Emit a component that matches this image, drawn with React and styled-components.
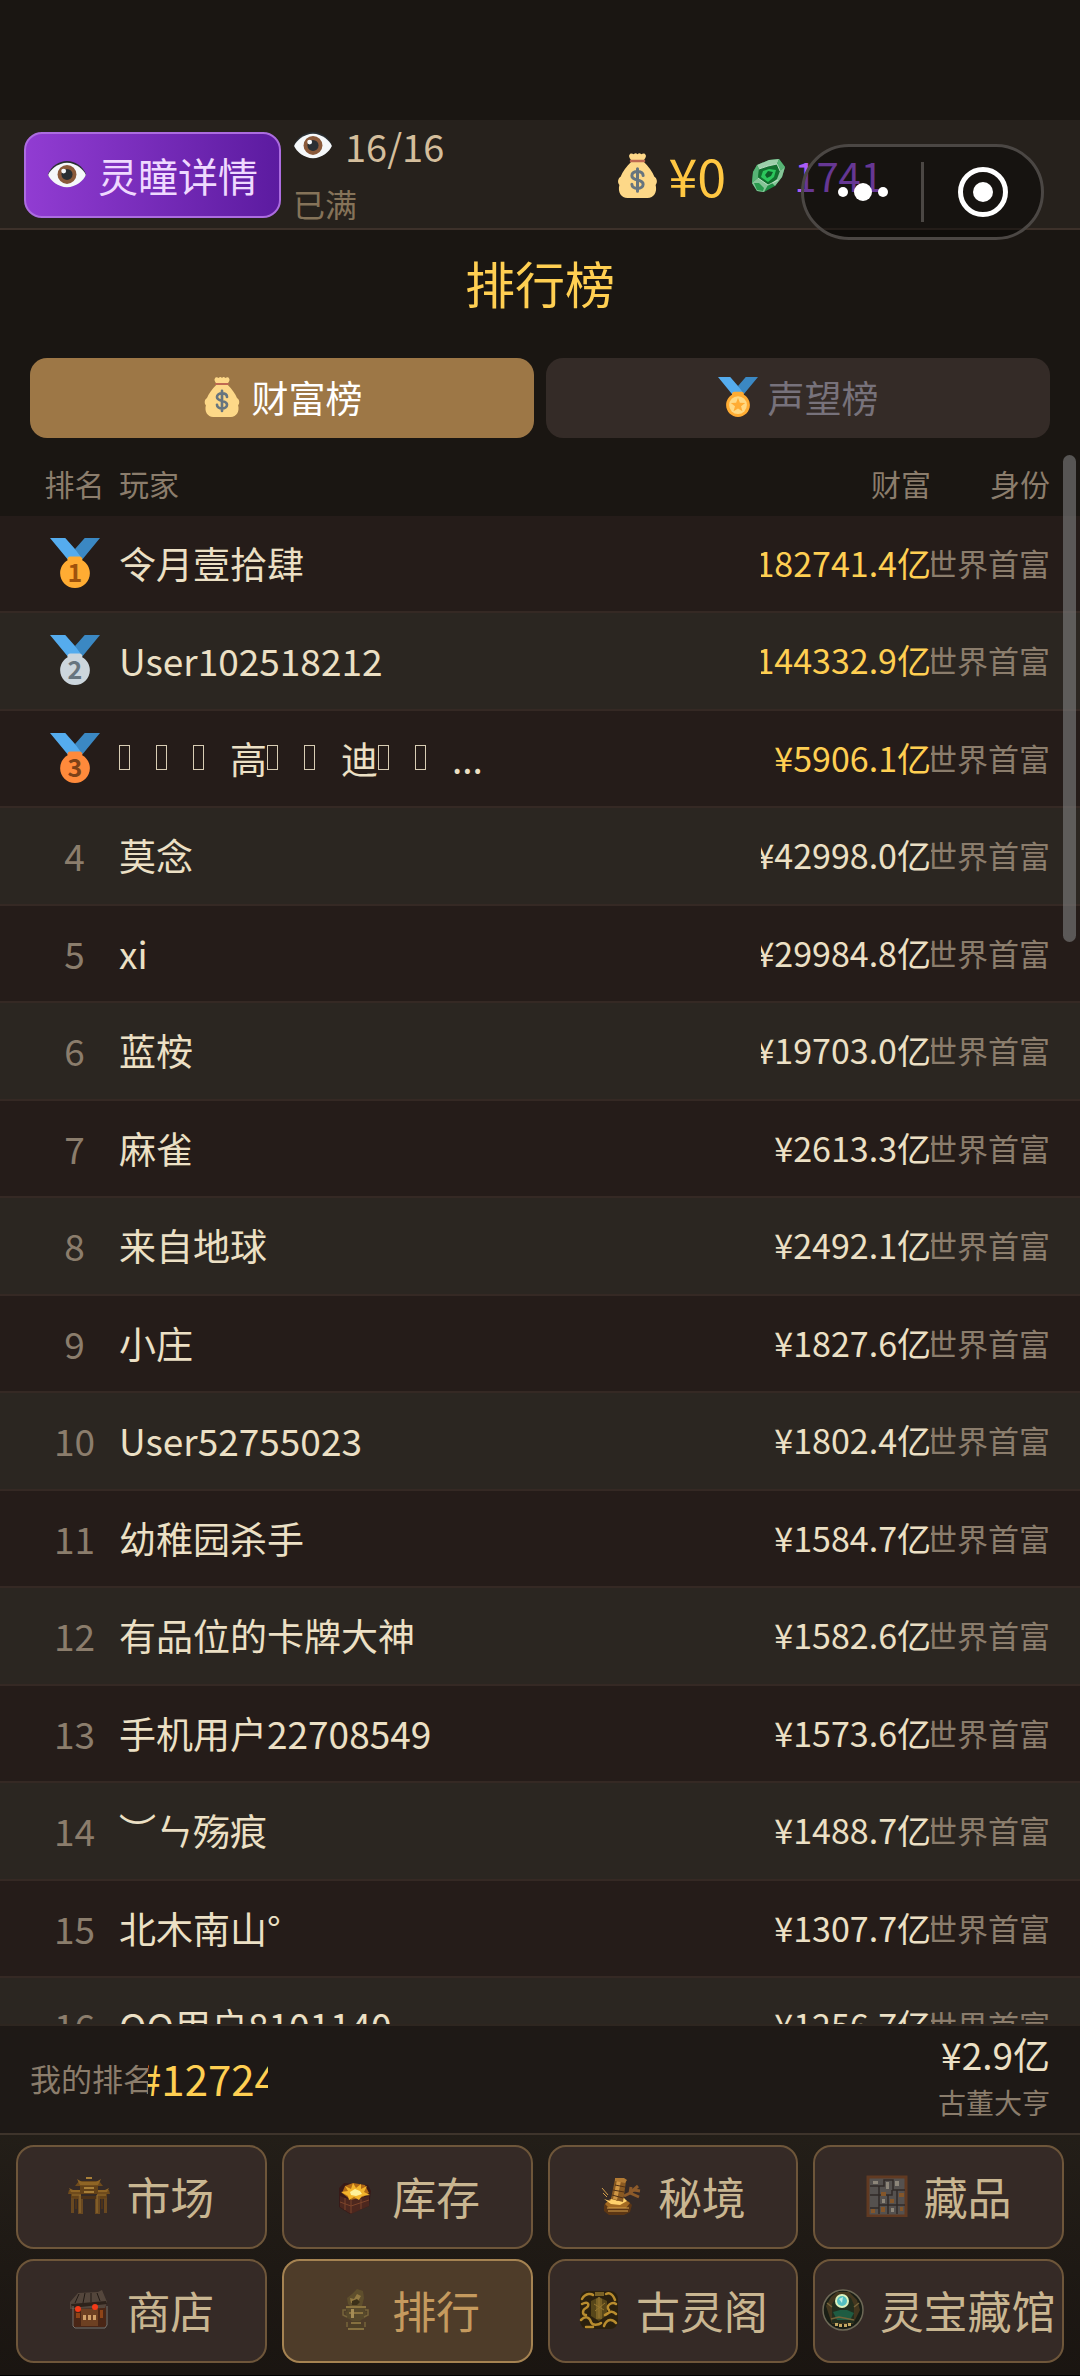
import React, { useState } from "react";
import styled, { createGlobalStyle } from "styled-components";


const GlobalStyle = createGlobalStyle`
    * {
        box-sizing: border-box;
    }
    body {
        margin: 0;
        background: #1a1612;
        color: #ece0c5;
        font-family: "Noto Sans CJK SC", "Noto Sans", sans-serif;
    }
    button {
        font-family: inherit;
        margin: 0;
        padding: 0;
        cursor: pointer;
    }
`

const Page = styled.div`
    position: relative;
    display: flex;
    flex-direction: column;
    height: 100vh;
    overflow: hidden;
`

const StatusSpace = styled.div`
    flex: none;
    height: 120px;
`

const TopBar = styled.header`
    flex: none;
    display: flex;
    align-items: center;
    height: 110px;
    padding: 2px 197px 0 24px;
    background: #26211c;
    border-bottom: 2px solid #3d312a;
`

const EyeButton = styled.button`
    display: flex;
    align-items: center;
    gap: 11px;
    height: 86px;
    padding: 0 21px;
    border: 2px solid #ac6ce0;
    border-radius: 18px;
    background: linear-gradient(90deg, #913cd2, #5c1ba0);
    color: #efd9ff;
    font-size: 40px;
    line-height: 48px;
    white-space: nowrap;
`

const EyeInfo = styled.div`
    margin-left: 12px;
    font-size: 32px;
    line-height: 58px;
    color: #857359;
`

const EyeCount = styled.div`
    display: flex;
    align-items: center;
    gap: 12px;
    font-size: 38px;
    line-height: 56px;
    color: #d4be9c;
`

const Wallet = styled.div`
    display: flex;
    align-items: center;
    margin-left: auto;
    gap: 24px;
`

const Amount = styled.div`
    display: flex;
    align-items: center;
    gap: 8px;
    font-size: ${props => props.$size}px;
    line-height: 56px;
    color: ${props => props.$color};
`

const Capsule = styled.div`
    position: absolute;
    top: 144px;
    right: 36px;
    display: flex;
    align-items: center;
    width: 243px;
    height: 96px;
    border: 3px solid #4b4744;
    border-radius: 48px;
    background: rgba(0, 0, 0, 0.4);
`

const CapsuleButton = styled.button`
    flex: 1;
    display: flex;
    align-items: center;
    justify-content: center;
    height: 100%;
    border: 0;
    background: none;
`

const CapsuleLine = styled.span`
    width: 3px;
    height: 60px;
    background: #4b4744;
`

const Title = styled.h1`
    flex: none;
    margin: 0;
    padding: 16px 0 40px;
    text-align: center;
    font-size: 50px;
    font-weight: 400;
    line-height: 72px;
    color: #ffcf52;
`

const Tabs = styled.div`
    flex: none;
    display: flex;
    gap: 12px;
    padding: 0 30px;
`

const Tab = styled.button`
    flex: 1;
    display: flex;
    align-items: center;
    justify-content: center;
    gap: 10px;
    height: 80px;
    padding-bottom: 2px;
    border: 0;
    border-radius: 17px;
    background: ${props => props.$active ? '#9d7746' : '#342b27'};
    color: ${props => props.$active ? '#ffffff' : '#77727b'};
    font-size: 37px;
    line-height: 48px;
`

const ListArea = styled.main`
    flex: 1;
    min-height: 0;
    position: relative;
    margin-top: 14px;
`

const Scroller = styled.div`
    height: 100%;
    overflow-y: auto;
    scrollbar-width: none;
`

const Thumb = styled.span`
    position: absolute;
    top: 3px;
    right: 4px;
    width: 13px;
    height: 487px;
    border-radius: 7px;
    background: rgba(128, 128, 128, 0.6);
`

const Board = styled.table`
    width: 100%;
    table-layout: fixed;
    border-spacing: 0;

    th, td {
        padding: 0 0 2px;
        text-align: left;
        font-weight: 400;
    }
    th {
        height: 64px;
        font-size: 30px;
        line-height: 40px;
        color: #8b7d6c;
    }
    td {
        border-bottom: 2px solid #352924;
    }
`

const Col = styled.col`
    width: ${props => props.$width}px;
`

const Row = styled.tr`
    height: 97px;
    background: #251c19;

    &:nth-child(even) {
        height: 98px;
        background: #2b2621;
    }
`

const Rank = styled.div`
    display: flex;
    justify-content: center;
    margin-left: 30px;
    font-size: 37px;
    line-height: 48px;
    color: #8b7d6c;
`

const HeadRank = styled(Rank)`
    font-size: 30px;
`

const Name = styled.div`
    display: flex;
    align-items: center;
    font-size: 37px;
    line-height: 48px;
    white-space: pre;
    color: #ece0c5;
`

const Missing = styled.span`
    width: 11px;
    height: 25px;
    margin-right: 26px;
    border: 1px solid #d8cdb4;
`

const Clip = styled.div`
    display: flex;
    justify-content: flex-end;
    overflow: hidden;
    white-space: nowrap;
    line-height: 48px;
`

const Wealth = styled(Clip)`
    font-size: 34px;
    color: ${props => props.$top ? '#ffcf52' : '#ece0c5'};
`

const Role = styled(Clip)`
    margin-right: 30px;
    font-size: 31px;
    color: #8b7d6c;
`

const HeadRole = styled(Role)`
    font-size: 30px;
`

const MyRank = styled.section`
    flex: none;
    display: flex;
    align-items: center;
    height: 109px;
    padding: 0 30px 4px;
    border-top: 2px solid #2e2620;
    background: #1e1916;
`

const MyLabel = styled.span`
    width: 118px;
    overflow: hidden;
    white-space: nowrap;
    font-size: 31px;
    line-height: 48px;
    color: #8b7d6c;
`

const MyNumber = styled.span`
    display: flex;
    justify-content: center;
    width: 120px;
    overflow: hidden;
    font-size: 42px;
    line-height: 56px;
    color: #ffcf52;
`

const MyWealth = styled.div`
    margin-left: auto;
    text-align: right;
    font-size: 37px;
    line-height: 48px;
`

const MyRole = styled.div`
    font-size: 28px;
    color: #8b7d6c;
`

const BottomNav = styled.nav`
    flex: none;
    display: grid;
    grid-template-columns: repeat(4, 1fr);
    gap: 10px 15px;
    padding: 10px 16px 12px;
    border-top: 2px solid #3e342b;
    border-bottom: 1px solid #000000;
    background: linear-gradient(#231e18, #1a1511);
`

const NavButton = styled.button`
    display: flex;
    align-items: center;
    justify-content: center;
    gap: 16px;
    height: 104px;
    padding-bottom: 2px;
    border: 2px solid ${props => props.$active ? '#a58352' : '#6e563a'};
    border-radius: 18px;
    background: ${props => props.$active ? '#4e3c29' : '#352a26'};
    color: ${props => props.$active ? '#c59a5e' : '#c9b691'};
    font-size: 44px;
    line-height: 56px;
    white-space: nowrap;
`


function Eye({ size }) {
    return (
        <svg width={size} height={size} viewBox="0 0 36 36" aria-hidden="true">
            <path fill="#292f33" d="M1 17C4 10 11 5.500 18 5.500S32 10 35 17v2H1z" />
            <path fill="#f5f8fa" d="M1 18c2-5 9-11 17-11s15 6 17 11c-2 5-9 11-17 11S3 23 1 18z" />
            <circle fill="#8a5a3b" cx="18" cy="17.500" r="8.500" />
            <circle fill="#292f33" cx="18" cy="17.500" r="5" />
            <circle fill="#f5f8fa" cx="15" cy="14.500" r="2.200" />
        </svg>
    )
}

function MoneyBag({ size }) {
    return (
        <svg width={size} height={size} viewBox="0 0 36 36" aria-hidden="true">
            <path fill="#fdd888" d="M13 7C9 11 6 15 4.500 19c-2.500 1.500-2.500 5-1 6.500C2 31 5 36 10 36h16c5 0 8-5 6.500-10.500 1.500-1.500 1.500-5-1-6.500C30 15 27 11 23 7z" />
            <path fill="#fdd888" d="M11.500 1.500C12.500-.5 14 .5 15 1c1-1.200 2-1.200 3 0 1-1.200 2-1.200 3 0 1-.5 2.500-1.500 3.500.5.8 1.500-.5 3-1.500 4.500H13c-1-1.500-2.300-3-1.500-4.500z" />
            <path fill="#bf6952" d="M12.500 5.300h11c1 0 1 2 0 2h-11c-1 0-1-2 0-2z" />
            <path fill="none" stroke="#67757f" strokeWidth="2.400" strokeLinecap="round" d="M18 12.500v18M22.500 18c0-2-2-3.200-4.500-3.200s-4.500 1.200-4.500 3.300c0 4.700 9 2.200 9 6.800 0 2.100-2 3.400-4.500 3.400s-4.500-1.300-4.500-3.300" />
        </svg>
    )
}

function Medal({ size, color, numColor, num }) {
    return (
        <svg width={size} height={size} viewBox="0 0 36 36" aria-hidden="true">
            <path fill="#55acee" d="M18 8l-7-8H0l14 17 11.500-4.750z" />
            <path fill="#3b88c3" d="M25 0l-7 8 5.400 7.300 1.200-1.500L36 0z" />
            <path fill={color} d="M23.200 16c.1-.2.100-.4.100-.7 0-1.100-.9-2-2-2h-6.700c-1.100 0-2 .9-2 2 0 .3.100.5.100.7-3.200 1.800-5.400 5.300-5.400 9.300C7.300 31.200 12.100 36 18 36s10.700-4.800 10.700-10.700c0-4-2.200-7.500-5.500-9.300z" />
            {num ? (
                <text x="18" y="32" textAnchor="middle" fontSize="18" fontWeight="700" fill={numColor}>{num}</text>
            ) : (
                <g>
                    <circle fill="#ffd983" cx="18" cy="25.300" r="8" />
                    <path fill="#ffac33" d="M18 18.600l1.700 4.500 4.800.2-3.800 3 1.300 4.600-4-2.600-4 2.600 1.300-4.600-3.800-3 4.800-.2z" />
                </g>
            )}
        </svg>
    )
}

function Gem() {
    return (
        <svg width="36" height="36" viewBox="0 0 36 36" aria-hidden="true">
            <path fill="#1f8f45" d="M3 15l4-7 12-5 10-1 6 8-3 10-7 9-11 6-7-1-5-8z" />
            <path fill="#9ccfaa" d="M7 8l12-5 10-1-2 5-9 2-9 3z" />
            <path fill="#57b375" d="M3 15l4-7 2 4-1 9-6 5zM29 2l6 8-5 4-3-7z" />
            <path fill="#12702f" d="M8 21l1-9 9-3 9-2 3 7-2 9-9 5z" />
            <path fill="#2cc75c" d="M11 20l2-6 6-2 7 1-2 7-6 5z" />
            <path fill="#0f5c28" d="M15 18l3-4 5 1-2 4-4 2z" />
            <path fill="#86c598" d="M8 21l10 7-4 7-7-1-5-8zM30 14l5-4-3 10-7 9-3-3 5-4z" />
            <path fill="#2a9a4e" d="M4 26l5 0 5 5-1 3-6-1z" />
            <path fill="none" stroke="#d4ecd8" strokeWidth="0.800" d="M9 12l9-3 9-2M8 21l10 7 10-5M30 14l-3-7" />
        </svg>
    )
}


// little pictures for the bottom navigation
const pictures = {
    gate: (
        <g>
            <path fill="#6f4b1c" d="M11 6h20l4 5H7zM1 15h13l2 4H0zM28 15h13l1 4H26z" />
            <path fill="#8f6525" d="M9 4l5 3h14l5-3-3 6H12zM1 13l4 2h9v2H3zM41 13l-4 2h-9v2h11z" />
            <path fill="#644218" d="M12 11h18v8H12zM3 19h10v5H3zM29 19h10v5H29z" />
            <path fill="#a87f38" d="M16 12h10v2H16zM16 16h10v2H16zM18 2h6v2h-6z" />
            <path fill="#694820" d="M3 23h3v15H3zM10 21h5v18h-5zM27 21h5v18h-5zM36 23h3v15h-3z" />
            <path fill="#4c3219" d="M7 24h2v10H7zM33 24h2v10h-2zM13 21h16v3H13z" />
            <path stroke="#9a7330" strokeWidth="1" d="M12 20v18M29 20v18M4 20h9M29 20h9" />
        </g>
    ),
    chest: (
        <g>
            <path fill="#371a18" d="M5 13l5-5 24 2 3 6-2 15-19 8-11-7z" />
            <path fill="#4d271e" d="M6 21l11 4 18-4v10l-18 8-11-7z" />
            <path fill="#b06a16" d="M8 18l3-7 8-3 12 2 4 8-6 4-12 3z" />
            <path fill="#f3b52c" d="M7 17l7-1-3-5 6 3 2-6 3 5 5-4v5l6-3-3 6 6 3-8 1-3 4-5-3-5 3-1-4z" />
            <path fill="#fff19a" d="M16 17l5-3 5 2 2 3-6 2-5-1z" />
            <path fill="none" stroke="#7d442a" strokeWidth="1" d="M17 25v13M6 27l11 4 18-6M11 23v12M27 24v10" />
        </g>
    ),
    scroll: (
        <g>
            <path fill="#5c3614" d="M4 30l4-4h20l4 4-2 7-6 3H9l-5-4z" />
            <path fill="#a36a22" d="M5 29l5-5h14l6 4-4 5H9z" />
            <path fill="#ffd16b" d="M4 24l6 2 2-4 5 4 7-3 3 3-7 4-9-1z" />
            <path fill="#8a5a22" d="M15 4l11 2-3 21-12-3z" />
            <path fill="#cf9645" d="M17 5l4 1-4 19-4-1z" />
            <path fill="#b27a33" d="M15 3h9l3 2-2 3-10-2z" />
            <path stroke="#503014" strokeWidth="1" d="M15 10l10 2M13 15l11 2M12 20l11 3" />
            <path fill="none" stroke="#8c5a2a" strokeWidth="3" d="M24 21l6-3 8-7M30 18l1-6M30 18l9 4M34 15l6 1" />
            <path stroke="#d6a04a" strokeWidth="1" d="M3 18l4 4M2 13l6 7M8 36h20M7 33h22" />
        </g>
    ),
    shelf: (
        <g>
            <path fill="#55514f" d="M2 2h38v39H2z" />
            <path fill="none" stroke="#613a22" strokeWidth="3" d="M2 2h38v39H2z" />
            <path fill="none" stroke="#302a28" strokeWidth="1.500" d="M4 11h14V5h9v10h12M4 20h9v-9M13 20h13v-5M13 20v19M22 20v19M31 15v24M13 30h26M4 33h9" />
            <path fill="#84562a" d="M15 17h5v4h-5zM33 18h5v4h-5zM24 24h4v4h-4zM15 32h4v5h-4zM5 34h4v4H5zM34 32h3v4h-3z" />
            <path fill="#8d867a" d="M20 7h3v7h-3zM7 6h5v3H7zM29 6h4v5h-4zM16 24h3v4h-3zM25 33h3v4h-3z" />
        </g>
    ),
    shop: (
        <g>
            <path fill="#4a2616" d="M5 16h33v22H5z" />
            <path fill="#54463c" d="M2 13l8-9 20-1 4-2 5 12-2 6-35 1z" />
            <path fill="#2d221b" d="M3 15l35-3 1 3-35 4z" />
            <path fill="none" stroke="#211914" strokeWidth="1" d="M11 5l-4 9M17 4l-2 10M23 4v9M29 4l3 8" />
            <path fill="#6d4022" d="M13 20h17v17H13z" />
            <path fill="#cf9f68" d="M15 26h3v5h-3zM20 26h3v5h-3zM25 26h3v5h-3z" />
            <circle fill="#f23a18" cx="10" cy="20" r="3" />
            <circle fill="#f23a18" cx="27" cy="18" r="3" />
            <path fill="#8f4417" d="M8 24h4v5H8zM32 21h3v8h-3z" />
            <path fill="none" stroke="#77706a" strokeWidth="1" d="M5 17v20l2 2h30l2-3V17" />
        </g>
    ),
    urn: (
        <g>
            <path fill="#5e4e2c" d="M14 15l-1-6 5-4 5-5 6 2 1 7-2 8H16z" />
            <path fill="#937a42" d="M16 9l4 1 3-5 4 2-3 5-7 2z" />
            <path fill="#3b3019" d="M18 12l5-2 3 3-3 3h-5z" />
            <path fill="#57492b" d="M12 17h20v3l-2 2 3 1-2 6-4 2-2 3H19l-2-3-4-2-2-6 3-1-2-2z" />
            <path fill="#8a733f" d="M12 17h20v2H12zM15 23h14v2H15z" />
            <path fill="#a58d55" d="M17 20h3v9h-3z" />
            <path fill="#4d4026" d="M18 32h8v3l3 2v4H15v-4l3-2z" />
            <path fill="#85703f" d="M17 33h10v2H17zM14 39h16v2H14z" />
            <path fill="none" stroke="#77643a" strokeWidth="1.500" d="M12 21H9v5l4 2M31 21h3v5l-4 2M13 33v5M31 33v5" />
        </g>
    ),
    tower: (
        <g>
            <rect fill="#2a200e" x="2" y="2" width="38" height="38" rx="8" />
            <path fill="#574619" d="M13 12l8-4 8 4v14l-8 6-8-5z" />
            <path fill="#7a6226" d="M17 3h9v4h-9zM18 10l3-2 3 2v20h-6z" />
            <path fill="none" stroke="#b88c2e" strokeWidth="2.500" strokeLinecap="round" d="M4 10c4-7 10-5 11-4M37 11C34 3 30 4 28 5M4 15c7-4 8 2 4 4s-4 7 0 7M38 15c-4-3-11 2-7 6M38 25c-5-5-8 0-11 1M3 31c5-5 9-2 10 2s8 3 10 1M26 37c3-8 9-7 12-3M8 38h7" />
            <path stroke="#97772f" strokeWidth="1" d="M21 8v21M16 15l10 6M27 14l-10 8" />
        </g>
    ),
    orb: (
        <g>
            <circle fill="#191e15" stroke="#6d6856" strokeWidth="1.500" cx="21" cy="21" r="20" />
            <path fill="#43371f" d="M4 17l5-9 6-5h12l8 8 3 10-7 14H10z" />
            <path fill="#222e1e" d="M10 34V15l4-6 7-4 8 4 3 7v18z" />
            <path fill="#1f5c42" d="M11 23l7-2h7l7 3-4 7H15z" />
            <circle fill="#dcf2bd" cx="20" cy="12" r="7" />
            <circle fill="#54bfc0" cx="20" cy="12" r="5" />
            <path fill="#bdebe0" d="M17 10l4-2-1 6z" />
            <path fill="none" stroke="#75643a" strokeWidth="1.500" d="M9 30l8-2 5 1 10 2M5 14l5 4M32 18l5-4" />
            <path fill="#c2a862" d="M13 34h3v3h-3zM17 35h3v3h-3zM22 35h3v3h-3zM26 34h3v3h-3z" />
        </g>
    ),
}

const players = [
    { name: '令月壹拾肆', wealth: '¥182741.4亿' },
    { name: 'User102518212', wealth: '¥144332.9亿' },
    { name: '□□□高□□迪□□...', wealth: '¥5906.1亿' },
    { name: '莫念', wealth: '¥42998.0亿' },
    { name: 'xi', wealth: '¥29984.8亿' },
    { name: '蓝桉', wealth: '¥19703.0亿' },
    { name: '麻雀', wealth: '¥2613.3亿' },
    { name: '来自地球', wealth: '¥2492.1亿' },
    { name: '小庄', wealth: '¥1827.6亿' },
    { name: 'User52755023', wealth: '¥1802.4亿' },
    { name: '幼稚园杀手', wealth: '¥1584.7亿' },
    { name: '有品位的卡牌大神', wealth: '¥1582.6亿' },
    { name: '手机用户22708549', wealth: '¥1573.6亿' },
    { name: '︶ㄣ殇痕', wealth: '¥1488.7亿' },
    { name: '北木南山°', wealth: '¥1307.7亿' },
    { name: 'QQ用户8101140', wealth: '¥1256.7亿' },
]

const medals = [
    { color: '#ffac33', numColor: '#9e520c' },
    { color: '#ccd6dd', numColor: '#67757f' },
    { color: '#ff8a3b', numColor: '#7c4118' },
]

const navItems = [
    { label: '市场', icon: 'gate' },
    { label: '库存', icon: 'chest' },
    { label: '秘境', icon: 'scroll' },
    { label: '藏品', icon: 'shelf' },
    { label: '商店', icon: 'shop' },
    { label: '排行', icon: 'urn' },
    { label: '古灵阁', icon: 'tower' },
    { label: '灵宝藏馆', icon: 'orb' },
]

function PlayerName({ name }) {
    return (
        <Name>
            {name.split(/(□)/).map((part, i) => part === '□' ? <Missing key={i} /> : part)}
        </Name>
    )
}


export default function App() {

    const [ tab, setTab ] = useState('wealth');
    const [ page, setPage ] = useState('排行');

    return (
        <Page>
            <GlobalStyle />
            <StatusSpace />

            <TopBar>
                <EyeButton><Eye size={40} />灵瞳详情</EyeButton>
                <EyeInfo>
                    <EyeCount><Eye size={40} />16/16</EyeCount>
                    已满
                </EyeInfo>
                <Wallet>
                    <Amount $size={52} $color="#ffc742"><MoneyBag size={45} />¥0</Amount>
                    <Amount $size={40} $color="#ab5cf7"><Gem />1741</Amount>
                </Wallet>
            </TopBar>

            <Capsule>
                <CapsuleButton aria-label="更多">
                    <svg width="52" height="20" viewBox="0 0 52 20" fill="#ffffff">
                        <circle cx="6" cy="10" r="5" />
                        <circle cx="26" cy="10" r="9" />
                        <circle cx="46" cy="10" r="5" />
                    </svg>
                </CapsuleButton>
                <CapsuleLine />
                <CapsuleButton aria-label="关闭">
                    <svg width="50" height="50" viewBox="0 0 50 50">
                        <circle cx="25" cy="25" r="22.500" fill="none" stroke="#ffffff" strokeWidth="5" />
                        <circle cx="25" cy="25" r="10" fill="#ffffff" />
                    </svg>
                </CapsuleButton>
            </Capsule>

            <Title>排行榜</Title>

            <Tabs>
                <Tab $active={tab === 'wealth'} onClick={() => setTab('wealth')}>
                    <MoneyBag size={40} />财富榜
                </Tab>
                <Tab $active={tab === 'fame'} onClick={() => setTab('fame')}>
                    <Medal size={40} color="#ffac33" />声望榜
                </Tab>
            </Tabs>

            <ListArea>
                <Scroller>
                    <Board>
                        <colgroup>
                            <Col $width={119} />
                            <col />
                            <Col $width={170} />
                            <Col $width={149} />
                        </colgroup>
                        <thead>
                            <tr>
                                <th><HeadRank>排名</HeadRank></th>
                                <th>玩家</th>
                                <th><Clip>财富</Clip></th>
                                <th><HeadRole>身份</HeadRole></th>
                            </tr>
                        </thead>
                        <tbody>
                            {players.map((player, i) => (
                                <Row key={player.name}>
                                    <td><Rank>{medals[i] ? <Medal size={50} num={i + 1} {...medals[i]} /> : i + 1}</Rank></td>
                                    <td><PlayerName name={player.name} /></td>
                                    <td><Wealth $top={i < 3}>{player.wealth}</Wealth></td>
                                    <td><Role>世界首富</Role></td>
                                </Row>
                            ))}
                        </tbody>
                    </Board>
                </Scroller>
                <Thumb />
            </ListArea>

            <MyRank>
                <MyLabel>我的排名</MyLabel>
                <MyNumber>#12724</MyNumber>
                <MyWealth>
                    ¥2.9亿
                    <MyRole>古董大亨</MyRole>
                </MyWealth>
            </MyRank>

            <BottomNav>
                {navItems.map(item => (
                    <NavButton key={item.label} $active={page === item.label} onClick={() => setPage(item.label)}>
                        <svg width="42" height="42" viewBox="0 0 42 42" aria-hidden="true">{pictures[item.icon]}</svg>
                        {item.label}
                    </NavButton>
                ))}
            </BottomNav>
        </Page>
    );

}
